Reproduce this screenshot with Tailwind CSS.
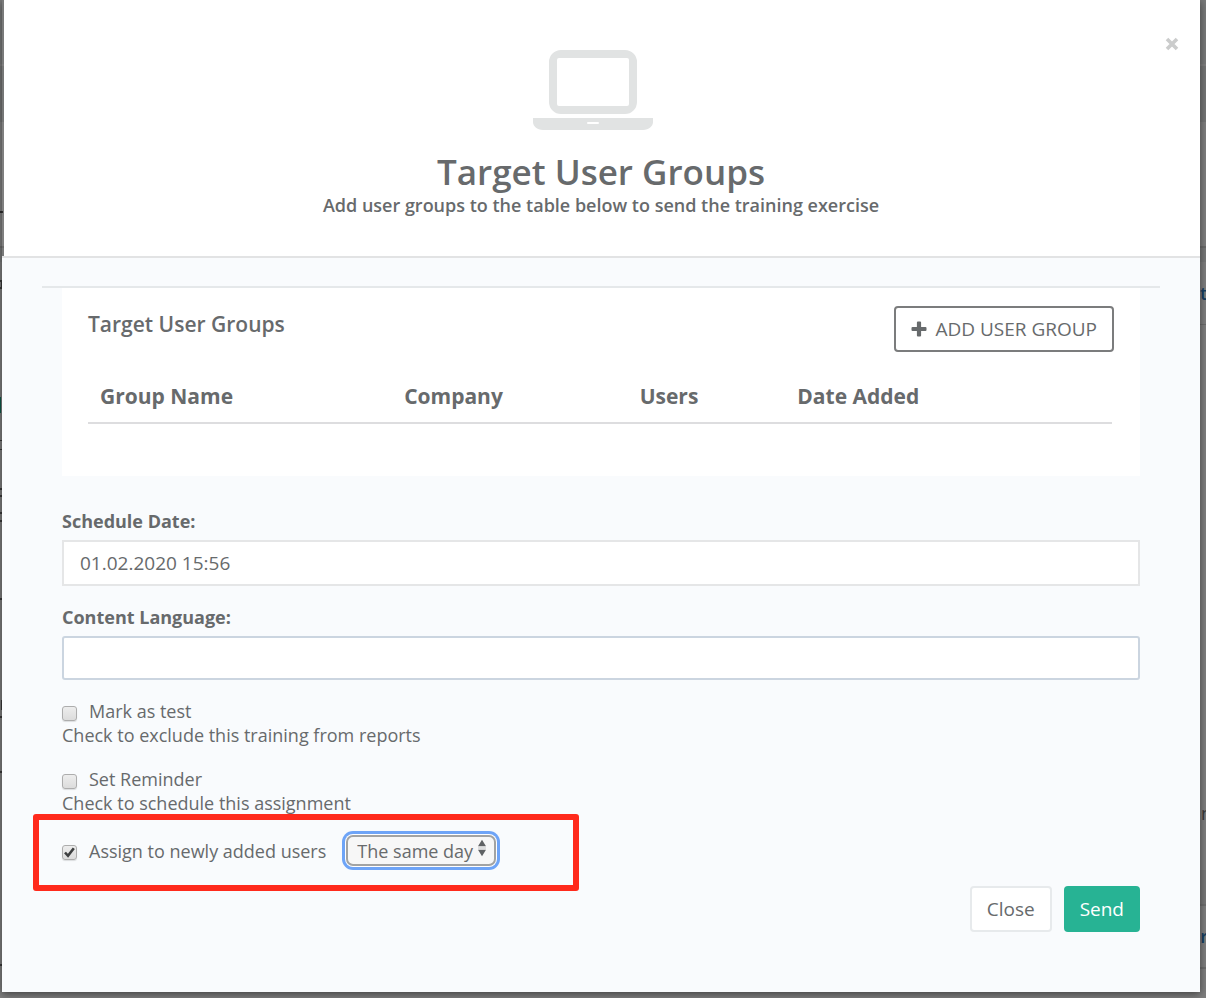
<!DOCTYPE html>
<html lang="en">
<head>
<meta charset="utf-8">
<meta name="viewport" content="width=device-width, initial-scale=1">
<title>Target User Groups</title>
<script src="https://cdn.jsdelivr.net/npm/@tailwindcss/browser@4"></script>
</head>
<body class="relative min-h-screen overflow-x-hidden bg-[#7f7f7f] font-['Open_Sans',sans-serif] text-lg leading-6 text-[#676a6c]">

<!-- Slivers of the dimmed page behind the dialog -->
<div class="absolute inset-0 overflow-hidden" aria-hidden="true">
  <div class="absolute left-0 top-0 h-16 w-full bg-[#797a7a]"></div>
  <div class="absolute left-0 top-[66px] h-14 w-full bg-[#757676]"></div>
  <div class="absolute left-0 top-[246px] h-4 w-full border-t-2 border-[#6c6c6c] bg-[#787979]"></div>
  <div class="absolute left-0 top-[211px] h-[2px] w-[3px] bg-[#2c2c2c]"></div>
  <div class="absolute left-0 top-[280px] h-[9px] w-0.5 border-y-2 border-r border-[#3a3a3a]"></div>
  <div class="absolute left-0 top-[397px] h-4 w-px bg-[#0d5a49]"></div>
  <div class="absolute left-0 top-[440px] h-[10px] w-0.5 border-y border-[#3a3a3a]"></div>
  <div class="absolute left-0 top-[488px] h-[9px] w-0.5 border-y-2 border-[#3a3a3a]"></div>
  <div class="absolute left-0 top-[512px] h-[10px] w-0.5 border-y-2 border-[#3a3a3a]"></div>
  <div class="absolute left-0 top-[598px] h-[2px] w-0.5 bg-[#3a3a3a]"></div>
  <div class="absolute left-0 top-[700px] h-[10px] w-0.5 border-r border-[#3a3a3a]"></div>
  <div class="absolute left-0 top-[716px] h-[2px] w-0.5 bg-[#3a3a3a]"></div>
  <div class="absolute left-0 top-[771px] h-[2px] w-0.5 bg-[#3a3a3a]"></div>
  <div class="absolute left-0 top-[964px] h-[2px] w-0.5 bg-[#3a3a3a]"></div>
  <div class="absolute right-0 top-[324px] h-px w-2 bg-[#6c6c6c]"></div>
  <div class="absolute right-0 top-[870px] h-9 w-2 border-b-2 border-[#6f6f6f] bg-[#787878]"></div>
  <div class="absolute right-0 top-[967px] h-[2px] w-2 bg-[#6f6f6f]"></div>
  <div class="absolute -right-px top-[281px] font-semibold text-[#173f63]">t</div>
  <div class="absolute -right-1.5 top-[801px] text-[#3a3a3a]">n</div>
  <div class="absolute -right-0.5 top-[924px] font-semibold text-[#173f63]">or</div>
</div>

<main role="dialog" aria-labelledby="dialog-title" class="relative mr-1.5 ml-0.5 shadow-[0_2px_8px_rgba(0,0,0,0.5)]">
  <header class="relative ml-0.5 bg-white pt-[50px] pb-[38px] text-center">
    <button type="button" aria-label="Close dialog" class="absolute top-9 right-5 flex h-4 w-4 items-center justify-center text-[#cbcccc]">
      <svg class="h-3.5 w-3.5" viewBox="0 0 14 14" fill="none" stroke="currentColor" stroke-width="3.6"><path d="M2 2 12 12M12 2 2 12"/></svg>
    </button>
    <div class="flex justify-center pr-[18px]">
      <svg class="h-20 w-[120px]" viewBox="0 0 120 80" aria-hidden="true">
        <path d="M16 12a12 12 0 0 1 12-12h64a12 12 0 0 1 12 12v40a12 12 0 0 1-12 12H28a12 12 0 0 1-12-12zM26 8a2 2 0 0 0-2 2v44a2 2 0 0 0 2 2h68a2 2 0 0 0 2-2V10a2 2 0 0 0-2-2z" fill="#e1e3e3" fill-rule="evenodd"/>
        <path d="M0 68h120v4c0 4-4 8-10 8H10C4 80 0 76 0 72zM55 72a1 1 0 0 0 0 2h10a1 1 0 0 0 0-2z" fill="#e1e3e3" fill-rule="evenodd"/>
      </svg>
    </div>
    <h1 id="dialog-title" class="mt-[22px] pr-0.5 text-[35px] leading-10 font-semibold">Target User Groups</h1>
    <p class="mt-px pb-px pr-0.5 font-semibold">Add user groups to the table below to send the training exercise</p>
  </header>

  <form class="border-t-2 border-[#e2e3e4] bg-[#f9fbfd] px-10 pt-7 pb-[60px]">
    <div class="border-t-2 border-[#e5e8ea] px-5">
      <section class="bg-white px-[26px] pb-[52px]">
        <div class="flex items-start justify-between pt-[18px]">
          <h2 class="pt-1.5 text-[21px] leading-6 font-semibold">Target User Groups</h2>
          <button type="button" class="flex h-[46px] items-center gap-2 rounded-[4px] border-2 border-[#7b7c7d] px-[15px] text-[19px]">
            <svg class="h-4 w-4" viewBox="0 0 16 16" fill="currentColor" aria-hidden="true"><path d="M6.9.5h2.2q1 0 1 1v4.4h4.4q1 0 1 1v2.2q0 1-1 1h-4.4v4.4q0 1-1 1H6.9q-1 0-1-1v-4.4H1.5q-1 0-1-1V6.900q0-1 1-1h4.400V1.500q0-1 1-1z"/></svg>
            ADD USER GROUP
          </button>
        </div>
        <div class="pt-[18px] pr-0.5">
          <table class="w-full table-fixed text-left text-[21px] leading-7">
            <thead>
              <tr class="border-b-2 border-[#dddddf]">
                <th class="w-[29.7%] p-3 font-bold">Group Name</th>
                <th class="w-[23%] p-3 font-bold">Company</th>
                <th class="w-[15.4%] p-3 font-bold">Users</th>
                <th class="p-3 font-bold">Date Added</th>
              </tr>
            </thead>
          </table>
        </div>
      </section>

      <label for="date" class="mt-[33px] block font-bold">Schedule Date:</label>
      <input id="date" type="text" value="01.02.2020 15:56" class="mt-[7px] block h-[46px] w-full border-2 border-[#e5e6e7] bg-white px-4 text-[19px] outline-none">

      <label for="language" class="mt-[19px] block font-bold">Content Language:</label>
      <input id="language" type="text" class="mt-[7px] block h-11 w-full rounded-[3px] border-2 border-[#cbd5e0] bg-white px-4 text-[19px] outline-none">

      <div class="mt-[19px]">
        <div class="flex items-center gap-3">
          <input id="test" type="checkbox" class="mt-1 h-[15px] w-[15px] appearance-none rounded-[3px] border border-[#adadad] bg-linear-to-b from-[#ededed] to-[#dcdcdc] shadow-[0_1px_1px_rgba(0,0,0,0.12)]">
          <label for="test">Mark as test</label>
        </div>
        <p>Check to exclude this training from reports</p>
      </div>

      <div class="mt-5">
        <div class="flex items-center gap-3">
          <input id="reminder" type="checkbox" class="mt-1 h-[15px] w-[15px] appearance-none rounded-[3px] border border-[#adadad] bg-linear-to-b from-[#ededed] to-[#dcdcdc] shadow-[0_1px_1px_rgba(0,0,0,0.12)]">
          <label for="reminder">Set Reminder</label>
        </div>
        <p>Check to schedule this assignment</p>
      </div>

      <div class="relative mt-5 inline-flex items-center gap-3 align-top">
        <span class="relative mt-1 block h-[15px] w-[15px]">
          <input id="assign" type="checkbox" checked class="block h-[15px] w-[15px] appearance-none rounded-[3px] border border-[#adadad] bg-linear-to-b from-[#ededed] to-[#dcdcdc] shadow-[0_1px_1px_rgba(0,0,0,0.12)]">
          <svg class="pointer-events-none absolute inset-0 h-[15px] w-[15px]" viewBox="0 0 15 15" fill="none" stroke="#3d3f40" stroke-width="2.6" aria-hidden="true"><path d="M3 7.500 6 10.800 11.800 3.200"/></svg>
        </span>
        <label for="assign">Assign to newly added users</label>
        <span class="relative ml-2 block">
          <select id="delay" aria-label="Assignment delay" class="block h-[31px] w-[150px] appearance-none rounded-[7px] border-2 border-[#a2a3a3] bg-[#f7f7f7] pr-4 pl-[9px] leading-6 shadow-[0_0_0_1px_#fff,0_0_0_4px_#6ea4f7] outline-none">
            <option>The same day</option>
          </select>
          <svg class="pointer-events-none absolute top-1 right-[9px] h-[18px] w-2.5" viewBox="0 0 10 18" fill="#5f6264" aria-hidden="true"><path d="M5 .8 9 7.200H1zM5 17.200 9 10.800H1z"/><path d="M1 8.500h8v1H1z" opacity=".35"/></svg>
        </span>
        <!-- Highlight frame -->
        <span class="pointer-events-none absolute -top-[21px] -right-[83px] -bottom-[25px] -left-[29px] rounded-[3px] border-[6px] border-[#ff2a1c]"></span>
      </div>

      <div class="mt-5 flex justify-end gap-3">
        <button type="button" class="h-[46px] rounded-[4px] border-2 border-[#e7eaec] bg-white px-[15px] text-[19px]">Close</button>
        <button type="submit" class="h-[46px] rounded-[4px] bg-[#27b394] px-4 text-[19px] text-white">Send</button>
      </div>
    </div>
  </form>
</main>
</body>
</html>
